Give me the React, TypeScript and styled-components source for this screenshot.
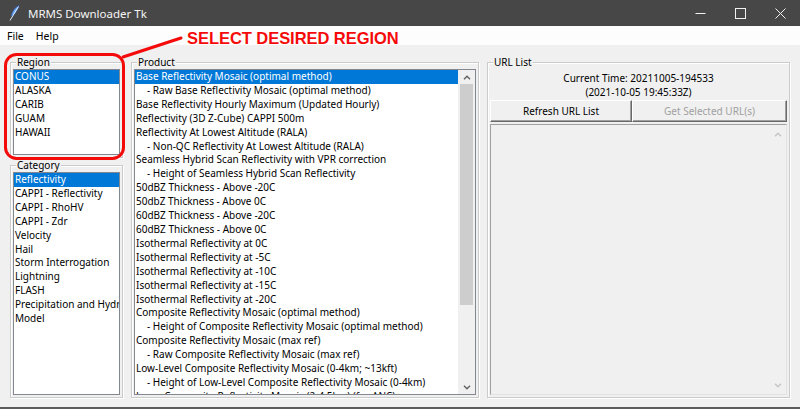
import styled, { createGlobalStyle } from "styled-components";

const GlobalStyle = createGlobalStyle`
  html, body { margin: 0; padding: 0; background: #f0f0f0; }
  body {
    font-family: "Noto Sans", "Liberation Sans", sans-serif;
    font-size: 10px;
    color: #000;
  }
  * { box-sizing: border-box; }
`;

const regions = ["CONUS", "ALASKA", "CARIB", "GUAM", "HAWAII"];

const categories = [
  "Reflectivity",
  "CAPPI - Reflectivity",
  "CAPPI - RhoHV",
  "CAPPI - Zdr",
  "Velocity",
  "Hail",
  "Storm Interrogation",
  "Lightning",
  "FLASH",
  "Precipitation and Hydr",
  "Model",
];

const products: [string, boolean][] = [
  ["Base Reflectivity Mosaic (optimal method)", false],
  ["- Raw Base Reflectivity Mosaic (optimal method)", true],
  ["Base Reflectivity Hourly Maximum (Updated Hourly)", false],
  ["Reflectivity (3D Z-Cube) CAPPI 500m", false],
  ["Reflectivity At Lowest Altitude (RALA)", false],
  ["- Non-QC Reflectivity At Lowest Altitude (RALA)", true],
  ["Seamless Hybrid Scan Reflectivity with VPR correction", false],
  ["- Height of Seamless Hybrid Scan Reflectivity", true],
  ["50dBZ Thickness - Above -20C", false],
  ["50dbZ Thickness - Above 0C", false],
  ["60dBZ Thickness - Above -20C", false],
  ["60dBZ Thickness - Above 0C", false],
  ["Isothermal Reflectivity at 0C", false],
  ["Isothermal Reflectivity at -5C", false],
  ["Isothermal Reflectivity at -10C", false],
  ["Isothermal Reflectivity at -15C", false],
  ["Isothermal Reflectivity at -20C", false],
  ["Composite Reflectivity Mosaic (optimal method)", false],
  ["- Height of Composite Reflectivity Mosaic (optimal method)", true],
  ["Composite Reflectivity Mosaic (max ref)", false],
  ["- Raw Composite Reflectivity Mosaic (max ref)", true],
  ["Low-Level Composite Reflectivity Mosaic (0-4km; ~13kft)", false],
  ["- Height of Low-Level Composite Reflectivity Mosaic (0-4km)", true],
  ["Layer Composite Reflectivity Mosaic (2-4.5km) (for ANC)", false],
];

const Window = styled.div`
  position: relative;
  width: 800px;
  height: 409px;
  display: flex;
  flex-direction: column;
  background: #f0f0f0;
  border-bottom: 2px solid #5b5b5b;
  overflow: hidden;
`;

const TitleBar = styled.div`
  height: 26px;
  flex-shrink: 0;
  display: flex;
  align-items: center;
  background: #474747;
  color: #f4f4f4;
`;

const TitleIcon = styled.svg`
  margin: 0 8px 0 9px;
`;

const TitleText = styled.span`
  flex: 1;
  font-size: 11.5px;
`;

const WinButton = styled.div`
  width: 40px;
  height: 26px;
  display: flex;
  align-items: center;
  justify-content: center;
`;

const MenuBar = styled.div`
  height: 19px;
  flex-shrink: 0;
  display: flex;
  align-items: center;
  padding-left: 1px;
  background: #fdfdfd;
`;

const MenuItem = styled.span`
  padding: 0 6px;
  font-size: 10.5px;
`;

const Content = styled.div`
  flex: 1;
  min-height: 0;
  display: flex;
  gap: 8px;
  padding: 17px 10px 9px 10px;
`;

const Column = styled.div`
  width: 113px;
  min-height: 0;
  display: flex;
  flex-direction: column;
  gap: 7px;
`;

const Frame = styled.div<{ $width?: number; $grow?: boolean }>`
  position: relative;
  min-height: 0;
  display: flex;
  flex-direction: column;
  width: ${(p) => (p.$width ? `${p.$width}px` : "auto")};
  flex: ${(p) => (p.$grow ? "1" : "0 0 auto")};
  padding: 6px 2px 2px 2px;
  border: 1px solid #cbcbcb;
  box-shadow: inset 1px 1px 0 #fff, 1px 1px 0 #fff;
`;

const Legend = styled.span`
  position: absolute;
  top: -8px;
  left: 5px;
  padding: 0 1px;
  line-height: 14px;
  background: #f0f0f0;
`;

const ListBox = styled.div<{ $height?: number }>`
  display: flex;
  min-height: 0;
  height: ${(p) => (p.$height ? `${p.$height}px` : "auto")};
  flex: ${(p) => (p.$height ? "0 0 auto" : "1")};
  border: 1px solid #828790;
  background: #fff;
  overflow: hidden;
`;

const Items = styled.div`
  flex: 1;
  min-width: 0;
  overflow: hidden;
`;

const Item = styled.div<{ $selected?: boolean; $indent?: boolean }>`
  height: 13.92px;
  line-height: 13.92px;
  padding-left: ${(p) => (p.$indent ? "12px" : "1px")};
  white-space: nowrap;
  overflow: hidden;
  background: ${(p) => (p.$selected ? "#0078d7" : "transparent")};
  color: ${(p) => (p.$selected ? "#fff" : "#000")};
`;

const ScrollBar = styled.div<{ $disabled?: boolean }>`
  width: 17px;
  display: flex;
  flex-direction: column;
  background: ${(p) => (p.$disabled ? "transparent" : "#f0f0f0")};
`;

const ScrollArrow = styled.div<{ $tall?: boolean }>`
  height: ${(p) => (p.$tall ? "18px" : "14px")};
  display: flex;
  align-items: center;
  justify-content: center;
`;

const ScrollTrack = styled.div`
  flex: 1;
  padding: 0 2px;
`;

const Thumb = styled.div`
  height: 221px;
  background: #cdcdcd;
`;

const TimeText = styled.div`
  padding-top: 2px;
  text-align: center;
  line-height: 14px;
`;

const ButtonRow = styled.div`
  display: flex;
  height: 22px;
  margin-top: 1px;
`;

const Button = styled.div<{ $disabled?: boolean; $width?: number }>`
  flex: ${(p) => (p.$width ? `0 0 ${p.$width}px` : "1")};
  display: flex;
  align-items: center;
  justify-content: center;
  color: ${(p) => (p.$disabled ? "#a0a0a0" : "#000")};
  background: #f0f0f0;
  border-top: 1px solid #fff;
  border-left: 1px solid #fff;
  border-right: 1px solid #696969;
  border-bottom: 1px solid #696969;
  box-shadow: inset -1px -1px 0 #a0a0a0;
`;

const UrlBox = styled.div`
  flex: 1;
  min-height: 0;
  display: flex;
  margin-top: 2px;
  border-top: 1px solid #a0a0a0;
  border-left: 1px solid #a0a0a0;
  border-right: 1px solid #e3e3e3;
  border-bottom: 1px solid #e3e3e3;
`;

const Spacer = styled.div`
  flex: 1;
`;

const Annotation = styled.svg`
  position: absolute;
  left: 0;
  top: 0;
  pointer-events: none;
`;

const Callout = styled.span`
  position: absolute;
  left: 187px;
  top: 29px;
  font-family: "Liberation Sans", Arial, sans-serif;
  font-weight: 700;
  font-size: 16.5px;
  line-height: 18px;
  letter-spacing: -0.05px;
  color: #f50a0a;
  white-space: nowrap;
`;

const Chevron = ({ up, color }: { up?: boolean; color: string }) => (
  <svg width="8" height="5" viewBox="0 0 8 5">
    <path
      d={up ? "M1 4.2 L4 1.2 L7 4.2" : "M1 0.8 L4 3.8 L7 0.8"}
      fill="none"
      stroke={color}
      strokeWidth="1.4"
    />
  </svg>
);

export default function App() {
  return (
    <>
      <GlobalStyle />
      <Window>
        <TitleBar>
          <TitleIcon width="11" height="16" viewBox="0 0 11 16">
            <path d="M10 0.5 C6 2.5 3 6.5 2.3 11 L4 10.2 C7 7.5 9 4 10 0.5 Z" fill="#6fa6ec" stroke="#2b5fbf" strokeWidth="0.8" />
            <path d="M9.5 1.5 L1 15.5" stroke="#e4efff" strokeWidth="1" />
          </TitleIcon>
          <TitleText>MRMS Downloader Tk</TitleText>
          <WinButton>
            <svg width="11" height="11" viewBox="0 0 11 11">
              <path d="M0.5 5.5 H10.5" stroke="#f0f0f0" strokeWidth="1" />
            </svg>
          </WinButton>
          <WinButton>
            <svg width="11" height="11" viewBox="0 0 11 11">
              <rect x="0.5" y="0.5" width="10" height="10" fill="none" stroke="#f0f0f0" strokeWidth="1" />
            </svg>
          </WinButton>
          <WinButton>
            <svg width="11" height="11" viewBox="0 0 11 11">
              <path d="M0.5 0.5 L10.5 10.5 M10.5 0.5 L0.5 10.5" stroke="#f0f0f0" strokeWidth="1" />
            </svg>
          </WinButton>
        </TitleBar>

        <MenuBar>
          <MenuItem>File</MenuItem>
          <MenuItem>Help</MenuItem>
        </MenuBar>

        <Content>
          <Column>
            <Frame>
              <Legend>Region</Legend>
              <ListBox $height={86}>
                <Items>
                  {regions.map((r, i) => (
                    <Item key={r} $selected={i === 0}>
                      {r}
                    </Item>
                  ))}
                </Items>
              </ListBox>
            </Frame>
            <Frame $grow>
              <Legend>Category</Legend>
              <ListBox>
                <Items>
                  {categories.map((c, i) => (
                    <Item key={c} $selected={i === 0}>
                      {c}
                    </Item>
                  ))}
                </Items>
              </ListBox>
            </Frame>
          </Column>

          <Frame $width={348}>
            <Legend>Product</Legend>
            <ListBox>
              <Items>
                {products.map(([p, indent], i) => (
                  <Item key={p} $selected={i === 0} $indent={indent}>
                    {p}
                  </Item>
                ))}
              </Items>
              <ScrollBar>
                <ScrollArrow>
                  <Chevron up color="#606060" />
                </ScrollArrow>
                <ScrollTrack>
                  <Thumb />
                </ScrollTrack>
                <ScrollArrow>
                  <Chevron color="#606060" />
                </ScrollArrow>
              </ScrollBar>
            </ListBox>
          </Frame>

          <Frame $width={303}>
            <Legend>URL List</Legend>
            <TimeText>
              Current Time: 20211005-194533
              <br />
              (2021-10-05 19:45:33Z)
            </TimeText>
            <ButtonRow>
              <Button $width={142}>Refresh URL List</Button>
              <Button $disabled>Get Selected URL(s)</Button>
            </ButtonRow>
            <UrlBox>
              <Spacer />
              <ScrollBar $disabled>
                <ScrollArrow $tall>
                  <Chevron up color="#c4c4c4" />
                </ScrollArrow>
                <Spacer />
                <ScrollArrow $tall>
                  <Chevron color="#c4c4c4" />
                </ScrollArrow>
              </ScrollBar>
            </UrlBox>
          </Frame>
        </Content>

        <Annotation width="800" height="409" viewBox="0 0 800 409">
          <rect x="5.5" y="54.5" width="118" height="104" rx="11" fill="none" stroke="#f50a0a" strokeWidth="3" />
          <path d="M123 57 L181 38" stroke="#f50a0a" strokeWidth="3" strokeLinecap="round" />
        </Annotation>
        <Callout>SELECT DESIRED REGION</Callout>
      </Window>
    </>
  );
}
